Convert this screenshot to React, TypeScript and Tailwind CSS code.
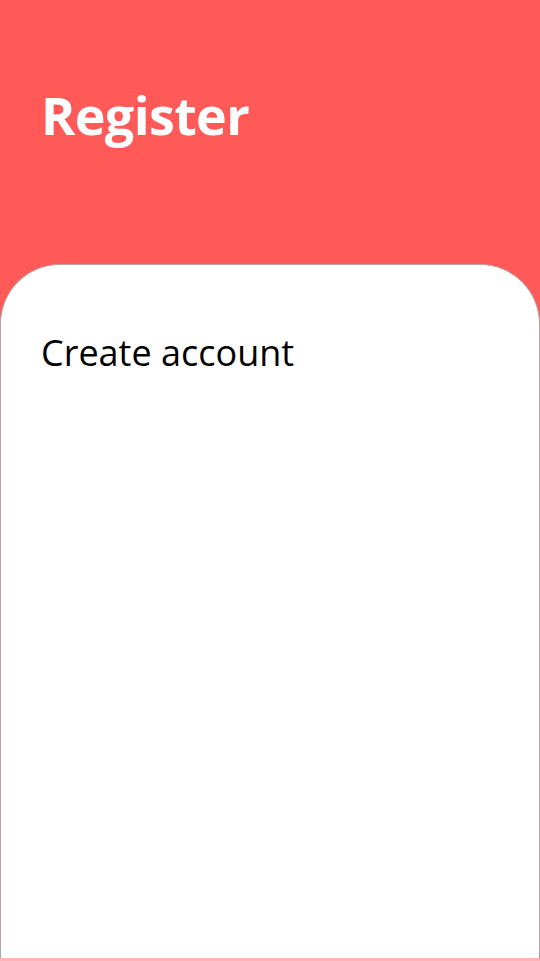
import React from "react";

export default function App() {
  return (
    <div
      className="w-[540px] h-[961px] bg-[#ff5a58] flex flex-col overflow-hidden"
      style={{ fontFamily: '"Open Sans", "Noto Sans", sans-serif' }}
    >
      <div className="h-[264px] shrink-0 px-[41px] pt-[84px]">
        <h1 className="text-[52px] font-bold text-white leading-[1.2] tracking-[-0.6px]">Register</h1>
      </div>
      <div className="flex-1 bg-white rounded-t-[60px] border border-[#b8a4a4] border-b-0 px-[40px] pt-[66px]">
        <h2 className="text-[36px] font-medium text-black leading-[1.2]">Create account</h2>
      </div>
      <div className="h-[3px] shrink-0 bg-[#ffb3b3]" />
    </div>
  );
}
